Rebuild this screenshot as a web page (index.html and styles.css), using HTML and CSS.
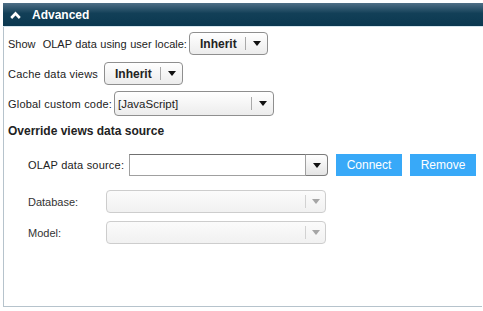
FILE: index.html
```html
<!DOCTYPE html>
<html lang="en">
<head>
    <meta charset="UTF-8">
    <title>Advanced</title>
    <link rel="stylesheet" href="styles.css">
</head>
<body>
    <div class="panel">
        <div class="panel-header">
            <svg class="caret" width="11" height="8" viewBox="0 0 11 8">
                <polyline points="1.2,7 5.5,2.5 9.8,7" fill="none" stroke="#fff" stroke-width="2.6"/>
            </svg>
            <span>Advanced</span>
        </div>
        <div class="panel-body">
            <div class="row row-locale">
                <label>Show&nbsp; OLAP data using user locale:</label>
                <div class="combo combo-small">
                    <span class="combo-value bold">Inherit</span>
                    <span class="combo-arrow"></span>
                </div>
            </div>

            <div class="row row-cache">
                <label>Cache data views</label>
                <div class="combo combo-small">
                    <span class="combo-value bold">Inherit</span>
                    <span class="combo-arrow"></span>
                </div>
            </div>

            <div class="row row-code">
                <label>Global custom code:</label>
                <div class="combo combo-wide">
                    <span class="combo-value">[JavaScript]</span>
                    <span class="combo-arrow"></span>
                </div>
            </div>

            <h3 class="section-title">Override views data source</h3>

            <div class="row row-source">
                <label>OLAP data source:</label>
                <div class="source-input">
                    <input type="text">
                    <span class="source-arrow"></span>
                </div>
                <button type="button" class="btn">Connect</button>
                <button type="button" class="btn">Remove</button>
            </div>

            <div class="row row-db">
                <label>Database:</label>
                <div class="combo combo-disabled">
                    <span class="combo-value"></span>
                    <span class="combo-arrow"></span>
                </div>
            </div>

            <div class="row row-model">
                <label>Model:</label>
                <div class="combo combo-disabled">
                    <span class="combo-value"></span>
                    <span class="combo-arrow"></span>
                </div>
            </div>
        </div>
    </div>
</body>
</html>
```

FILE: styles.css
```css
body {
    margin: 0;
    background-color: #fff;
    font-family: "Liberation Sans", Arial, sans-serif;
    font-size: 11px;
    color: #222;
}
.panel {
    margin: 3px 0 0 3px;
    width: 480px;
}
.panel-header {
    height: 23px;
    display: flex;
    align-items: center;
    background: linear-gradient(#4f6f86, #123f57 45%, #0b3850);
    border-bottom: 1px solid #d6e6ee;
    color: #fff;
    font-weight: bold;
    font-size: 12px;
}
.caret {
    margin-left: 7px;
    margin-right: 11px;
}
.panel-body {
    height: 279px;
    border-left: 1px solid #b6c3cc;
    border-bottom: 1px solid #b6c3cc;
    width: 478px;
    box-sizing: content-box;
}
.row {
    display: flex;
    align-items: center;
    padding-left: 4px;
}
.row label {
    white-space: nowrap;
    flex-shrink: 0;
}
.row-locale {
    padding-top: 5px;
}
.row-locale label {
    width: 181px;
    word-spacing: 0.5px;
}
.row-cache {
    margin-top: 7px;
}
.row-cache label {
    width: 96px;
    letter-spacing: 0.2px;
}
.row-code {
    margin-top: 6px;
}
.row-code label {
    width: 106px;
    letter-spacing: 0.2px;
}
.combo {
    display: flex;
    align-items: center;
    flex-shrink: 0;
    height: 23px;
    border: 1px solid #8f8f8f;
    border-radius: 4px;
    background: linear-gradient(#ffffff, #ececec);
    box-sizing: border-box;
}
.combo-value {
    flex: 1;
    padding-left: 7px;
    color: #222;
}
.bold {
    font-weight: bold;
    font-size: 12px;
    padding-left: 10px;
}
.combo-arrow {
    width: 21px;
    height: 13px;
    border-left: 1px solid #a9a9a9;
    display: flex;
    align-items: center;
    justify-content: center;
}
.combo-arrow::after,
.source-arrow::after {
    content: "";
    border-left: 4px solid transparent;
    border-right: 4px solid transparent;
    border-top: 5px solid #111;
}
.combo-small {
    width: 79px;
}
.combo-wide {
    width: 160px;
    height: 25px;
}
.combo-wide .combo-value {
    padding-left: 3px;
    font-size: 11.5px;
}
.section-title {
    margin: 8px 0 0 4px;
    font-size: 12px;
    font-weight: bold;
}
.row-source {
    margin-top: 16px;
    padding-left: 24px;
}
.row-source label {
    width: 101px;
    letter-spacing: 0.2px;
}
.source-input {
    display: flex;
    height: 22px;
}
.source-input input {
    width: 177px;
    height: 22px;
    margin: 0;
    padding: 0;
    border: 1px solid #a0a0a0;
    border-top-color: #707070;
    box-sizing: border-box;
}
.source-arrow {
    width: 22px;
    height: 22px;
    box-sizing: border-box;
    border: 1px solid #7c7c7c;
    border-left: none;
    border-radius: 0 4px 4px 0;
    background: linear-gradient(#ffffff, #e4e4e4);
    display: flex;
    align-items: center;
    justify-content: center;
}
.btn {
    height: 22px;
    padding: 0;
    width: 66px;
    margin-left: 8px;
    border: none;
    background-color: #38a9f8;
    color: #fff;
    font-family: "Liberation Sans", Arial, sans-serif;
    font-size: 12px;
}
.row-db {
    margin-top: 14px;
    padding-left: 24px;
}
.row-model {
    margin-top: 8px;
    padding-left: 24px;
}
.row-db label,
.row-model label {
    width: 78px;
    color: #333;
}
.combo-disabled {
    width: 220px;
    height: 23px;
    border-color: #cdcdcd;
    background: linear-gradient(#fbfbfb, #f1f1f1);
}
.combo-disabled .combo-arrow {
    border-left-color: #d2d2d2;
    width: 19px;
}
.combo-disabled .combo-arrow::after {
    border-top-color: #a5a5a5;
}
```
